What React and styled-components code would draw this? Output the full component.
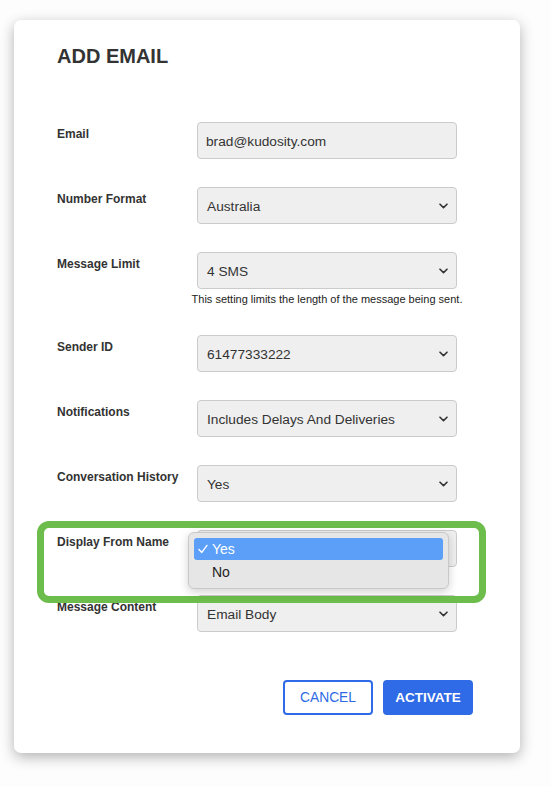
import React from "react";
import styled, { createGlobalStyle } from "styled-components";

const GlobalStyle = createGlobalStyle`
  html, body { margin: 0; padding: 0; background: #fdfdfd; }
  body { font-family: "Liberation Sans", Arial, Helvetica, sans-serif; color: #333; }
  * { box-sizing: border-box; }
`;

const Page = styled.div`
  padding: 20px 0 34px 14px;
`;

const Card = styled.div`
  position: relative;
  width: 506px;
  background: #fff;
  border-radius: 7px;
  box-shadow: 0 4px 14px rgba(0, 0, 0, 0.3);
  padding: 24px 47px 38px 43px;
  display: flex;
  flex-direction: column;
`;

const Title = styled.h2`
  margin: 0;
  font-size: 20px;
  line-height: 24px;
  font-weight: 700;
  color: #333;
`;

const Form = styled.div`
  margin-top: 54px;
  display: flex;
  flex-direction: column;
  gap: 28px;
`;

const Row = styled.div`
  position: relative;
  display: grid;
  grid-template-columns: 140px 260px;
  align-items: start;
`;

const Label = styled.div`
  margin-top: 5px;
  font-size: 12px;
  line-height: 14px;
  font-weight: 700;
  color: #333;
`;

const Field = styled.div`
  position: relative;
  display: flex;
  flex-direction: column;
  align-items: center;
`;

const TextInput = styled.input`
  width: 260px;
  height: 37px;
  margin: 0;
  padding: 1px 8px 0;
  background: #efefef;
  border: 1px solid #cbcbcb;
  border-radius: 4px;
  font-family: "Liberation Sans", Arial, sans-serif;
  font-size: 13.7px;
  color: #333;
  outline: none;
`;

const SelectBox = styled.div`
  width: 260px;
  height: 37px;
  padding: 1px 8px 0 9px;
  background: #efefef;
  border: 1px solid #cbcbcb;
  border-radius: 4px;
  display: flex;
  align-items: center;
  justify-content: space-between;
  font-size: 13.7px;
  color: #333;
`;

const Helper = styled.div`
  margin-top: 2px;
  margin-bottom: 0;
  font-size: 11px;
  line-height: 16px;
  color: #222;
  white-space: nowrap;
`;

const Highlight = styled.div`
  position: absolute;
  left: -20px;
  top: -9px;
  width: 449px;
  height: 82px;
  border: 7px solid #6cbd4b;
  border-radius: 12px;
  z-index: 2;
  pointer-events: none;
`;

const Menu = styled.div`
  position: absolute;
  left: -9px;
  top: 2px;
  width: 261px;
  height: 57px;
  padding: 5px 5px;
  background: #e6e6e6;
  border: 1px solid #c9c9c9;
  border-radius: 6px;
  box-shadow: 0 3px 10px rgba(0, 0, 0, 0.18);
  z-index: 3;
  display: flex;
  flex-direction: column;
  gap: 1px;
`;

const MenuItem = styled.div`
  height: 23px;
  border-radius: 3px;
  display: flex;
  align-items: center;
  padding-left: 4px;
  font-size: 14px;
  color: ${(p) => (p.$active ? "#fff" : "#222")};
  background: ${(p) => (p.$active ? "#5b9ff9" : "transparent")};
`;

const CheckSlot = styled.span`
  display: inline-flex;
  align-items: center;
  width: 14px;
  height: 14px;
  flex: none;
`;

const Footer = styled.div`
  margin-top: 48px;
  display: flex;
  justify-content: flex-end;
  gap: 10px;
`;

const Button = styled.button`
  width: 90px;
  height: 35px;
  margin: 0;
  padding: 0;
  border-radius: 4px;
  border: 2px solid #2f6be6;
  background: ${(p) => (p.$primary ? "#2f6be6" : "#fff")};
  color: ${(p) => (p.$primary ? "#fff" : "#2f6be6")};
  font-family: "Liberation Sans", Arial, sans-serif;
  font-size: ${(p) => (p.$primary ? "13.5px" : "13.8px")};
  font-weight: ${(p) => (p.$primary ? 700 : 400)};
  cursor: pointer;
`;

const Chevron = () => (
  <svg width="9" height="6" viewBox="0 0 9 6" fill="none">
    <path d="M1 1.2 L4.5 4.6 L8 1.2" stroke="#333" strokeWidth="1.6" strokeLinecap="round" strokeLinejoin="round" />
  </svg>
);

const CheckIcon = () => (
  <svg width="10" height="10" viewBox="0 0 10 10" fill="none">
    <path d="M1 5.4 L3.8 8.4 L9 1.4" stroke="#fff" strokeWidth="1.4" strokeLinecap="round" strokeLinejoin="round" />
  </svg>
);

const Select = ({ value }) => (
  <SelectBox>
    <span>{value}</span>
    <Chevron />
  </SelectBox>
);

export default function App() {
  return (
    <>
      <GlobalStyle />
      <Page>
        <Card>
          <Title>ADD EMAIL</Title>
          <Form>
            <Row>
              <Label>Email</Label>
              <Field>
                <TextInput readOnly value="brad@kudosity.com" />
              </Field>
            </Row>
            <Row>
              <Label>Number Format</Label>
              <Field>
                <Select value="Australia" />
              </Field>
            </Row>
            <Row>
              <Label>Message Limit</Label>
              <Field>
                <Select value="4 SMS" />
                <Helper>This setting limits the length of the message being sent.</Helper>
              </Field>
            </Row>
            <Row>
              <Label>Sender ID</Label>
              <Field>
                <Select value="61477333222" />
              </Field>
            </Row>
            <Row>
              <Label>Notifications</Label>
              <Field>
                <Select value="Includes Delays And Deliveries" />
              </Field>
            </Row>
            <Row>
              <Label>Conversation History</Label>
              <Field>
                <Select value="Yes" />
              </Field>
            </Row>
            <Row>
              <Highlight />
              <Label>Display From Name</Label>
              <Field>
                <Select value="Yes" />
                <Menu>
                  <MenuItem $active>
                    <CheckSlot>
                      <CheckIcon />
                    </CheckSlot>
                    Yes
                  </MenuItem>
                  <MenuItem>
                    <CheckSlot />
                    No
                  </MenuItem>
                </Menu>
              </Field>
            </Row>
            <Row>
              <Label>Message Content</Label>
              <Field>
                <Select value="Email Body" />
              </Field>
            </Row>
          </Form>
          <Footer>
            <Button>CANCEL</Button>
            <Button $primary>ACTIVATE</Button>
          </Footer>
        </Card>
      </Page>
    </>
  );
}
